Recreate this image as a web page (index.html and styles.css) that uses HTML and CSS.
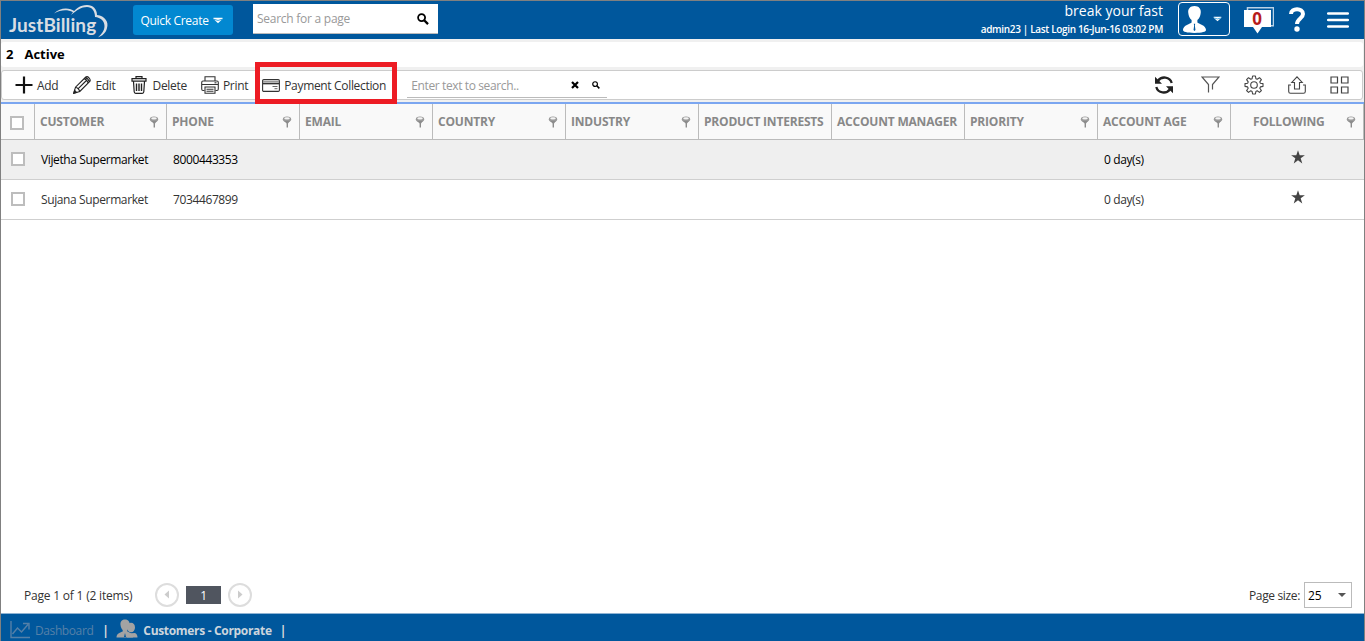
FILE: index.html
```html
<!DOCTYPE html>
<html lang="en">
<head>
  <meta charset="UTF-8">
  <title>JustBilling - Customers</title>
  <link rel="stylesheet" href="styles.css">
</head>
<body>

<!-- shared icons -->
<svg class="sprite">
  <symbol id="pin" viewBox="0 0 10 12">
    <ellipse cx="5" cy="3.2" rx="4.2" ry="2.8" fill="#9a9a9a"/>
    <ellipse cx="5" cy="2.4" rx="2.8" ry="1.1" fill="#f4f4f4"/>
    <path d="M2 5h6L6 7.500v4H4.600v-4z" fill="#8c8c8c"/>
  </symbol>
  <symbol id="lens" viewBox="0 0 12 12">
    <circle cx="4.600" cy="4.600" r="3.500" fill="none" stroke="#000" stroke-width="1.800"/>
    <path d="M7.200 7.200l3.800 3.900" stroke="#000" stroke-width="2.300"/>
  </symbol>
  <symbol id="caret" viewBox="0 0 10 7">
    <path d="M0.500 .800h9v1.200L5 6.200 0.500 2z" fill="#fff"/>
    <path d="M1 2.300q4 2.200 8 0" fill="none" stroke="#0288d1" stroke-width=".8"/>
  </symbol>
  <symbol id="star" viewBox="0 0 24 24">
    <path d="M12 0.500l2.900 8.500h8.900l-7.200 5.300 2.700 8.700-7.300-5.300-7.300 5.300 2.700-8.700L0.200 9h8.900z" fill="#444"/>
  </symbol>
</svg>

<header class="topbar">
  <div class="logo">
    <svg width="102" height="38" viewBox="0 0 102 38">
      <path d="M45 12.500C51 6.500 60 6 66 10.500l-2 .8C58 8.300 52 8.800 45 12.500z" fill="#d8dde3"/>
      <path d="M62 14C66 8 71 4 78 4c6 0 10 4 10 10 8 1 12 7 10 13-1 5-5 8-9 9.500 4-4 6.500-7 6.500-11.500 0-5-4-8.500-9.500-9 0-6-3-10-8-10-6 0-10 3-16 8z" fill="#d8dde3"/>
    </svg>
    <span>JustBilling</span>
  </div>
  <button class="quick">Quick Create <svg width="10" height="7"><use href="#caret"/></svg></button>
  <div class="page-search">
    <span>Search for a page</span>
    <svg width="12" height="12"><use href="#lens"/></svg>
  </div>
  <div class="account">
    <div class="company">break your fast</div>
    <div class="login">admin23 | Last Login 16-Jun-16 03:02 PM</div>
  </div>
  <button class="user">
    <svg width="25" height="29" viewBox="0 0 26 29">
      <path d="M13 0.500c4.500 0 7 3 6.500 7-.3 3-1.500 6-3.500 7.500v2.500c1 1.500 9 2.500 9 8 0 1.800-4 3-12 3s-12-1.200-12-3c0-5.500 8-6.500 9-8V15C8 13.500 6.800 10.500 6.500 7.500 6 3.500 8.500.500 13 .500z" fill="#fff"/>
      <path d="M12.300 19h1.400l-.3 2 .6 4.500-1 1-1-1 .6-4.500z" fill="#00579c"/>
    </svg>
    <svg width="9" height="6" viewBox="0 0 10 7"><use href="#caret"/></svg>
  </button>
  <div class="notice">
    <svg width="30" height="27" viewBox="0 0 30 27">
      <path d="M3.500 3V.800h26v18H27" fill="none" stroke="#b9d1e6" stroke-width="1.500"/>
      <path d="M0 3h27v17h-9l-4.500 6.500L9 20H0z" fill="#fff"/>
    </svg>
    <span>0</span>
  </div>
  <svg class="help" width="16" height="25" viewBox="0 0 16 25">
    <path d="M2 7C2 .800 14 .500 14 7c0 4.500-6 4.500-6 10" fill="none" stroke="#fff" stroke-width="4"/>
    <circle cx="8" cy="22" r="2.700" fill="#fff"/>
  </svg>
  <svg class="menu" width="22" height="16" viewBox="0 0 22 16">
    <path d="M1.200 1.500h19.600M1.200 8h19.600M1.200 14.500h19.600" stroke="#fff" stroke-width="2.600" stroke-linecap="round"/>
  </svg>
</header>

<h1 class="title"><span>2</span>Active</h1>

<div class="toolbar">
  <button class="tool add">
    <svg width="18" height="18" viewBox="0 0 18 18"><path d="M9 .500v17M.500 9h17" stroke="#111" stroke-width="2.200"/></svg>
    <span>Add</span>
  </button>
  <button class="tool edit">
    <svg width="18" height="18" viewBox="0 0 18 18" fill="none" stroke="#222" stroke-width="1.100">
      <path d="M.800 17.200l1.700-6L12.800 1q1.500-1 3.200.800t1 3.400L6.800 15.500zM2.500 11.200q3 .500 4.300 4.300M11 2.800q3 .800 4.200 4.200M12.200 1.600q3 .800 4.200 4.200M4.700 13.200l8.700-8.700"/>
      <path d="M.800 17.200l.800-2.800 2 2z" fill="#222"/>
    </svg>
    <span>Edit</span>
  </button>
  <button class="tool delete">
    <svg width="16" height="18" viewBox="0 0 16 18" fill="none" stroke="#222" stroke-width="1.200">
      <path d="M5 2.500V.700h6v1.800M1 2.700h14v2.500H1zM2.500 5.500l.7 10.300q.1 1.500 1.500 1.500h6.600q1.400 0 1.500-1.500l.7-10.300"/>
      <path d="M5.500 7.500v7.500M8 7.500v7.500M10.500 7.500v7.500" stroke-width="1.400"/>
    </svg>
    <span>Delete</span>
  </button>
  <button class="tool print">
    <svg width="18" height="18" viewBox="0 0 18 18" fill="none" stroke="#333" stroke-width="1.100">
      <path d="M4 5V.700h10V5M3.500 14.500H2Q.700 14.500.700 13V6.500Q.700 5 2 5h14q1.300 0 1.300 1.500V13q0 1.500-1.300 1.500h-1.500M.700 8.500h16.600"/>
      <path d="M4 11h10v6.300H4zM5.500 13.200h7M5.500 15.200h7"/>
      <path d="M13.500 6.800h2"/>
    </svg>
    <span>Print</span>
  </button>
  <button class="tool payment">
    <svg width="18" height="13" viewBox="0 0 18 13" fill="none" stroke="#333">
      <rect x=".600" y=".600" width="16.800" height="11.800" rx="1.200" stroke-width="1.100"/>
      <path d="M1 2.500h16" stroke="#999"/>
      <path d="M1 4.500h16" stroke-width="1.700"/>
      <path d="M10.500 7.500h5M12.500 9.700h3" stroke="#666"/>
    </svg>
    <span>Payment Collection</span>
  </button>
  <div class="grid-search">
    <span>Enter text to search..</span>
    <svg class="clear" width="8" height="8" viewBox="0 0 8 8"><path d="M1 1l6 6M7 1L1 7" stroke="#000" stroke-width="2.200"/></svg>
    <svg width="8" height="8"><use href="#lens"/></svg>
  </div>
  <div class="actions">
    <svg width="20" height="18" viewBox="0 0 20 18" fill="none" stroke="#222" stroke-width="2.300">
      <path d="M17.700 7C16 .500 7.500-.300 3.700 5M2.300 11C4 17.500 12.500 18.300 16.300 13"/>
      <path d="M1 .800v7h7zM19 17.200v-7h-7z" fill="#222" stroke="none"/>
    </svg>
    <svg width="19" height="18" viewBox="0 0 19 18" fill="none" stroke="#555" stroke-width="1.200">
      <path d="M7.500 16.500V8.500L1 1h17l-6.500 7.500v5"/>
    </svg>
    <svg width="20" height="20" viewBox="0 0 20 20" fill="none" stroke="#444" stroke-width="1.100" stroke-linejoin="round">
      <path d="M8.600 1h2.800l.5 2.700 1.300.6 2.300-1.600 1.900 1.900-1.600 2.300.6 1.300 2.600.4v2.800l-2.600.5-.6 1.300 1.600 2.300-1.900 1.900-2.300-1.600-1.300.6-.5 2.600H8.600l-.5-2.600-1.300-.6-2.300 1.600-1.900-1.900 1.600-2.300-.6-1.300L1 11.400V8.600l2.600-.4.600-1.300-1.600-2.300 1.900-1.900 2.300 1.600 1.300-.6z"/>
      <circle cx="10" cy="10" r="3.300"/>
    </svg>
    <svg width="18" height="18" viewBox="0 0 18 18" fill="none" stroke="#444" stroke-width="1.100">
      <path d="M3 9H.700v6.500q0 1.800 1.800 1.800h13q1.800 0 1.800-1.800V9H15"/>
      <path d="M6.500 13V6.500H3.800L9 .900l5.200 5.600h-2.700V13z"/>
    </svg>
    <svg width="19" height="18" viewBox="0 0 19 18" fill="none" stroke="#444" stroke-width="1.200">
      <path d="M1 1h6.500v6H1zM11.500 1H18v6h-6.500zM1 11h6.500v6H1zM11.500 11H18v6h-6.500z"/>
    </svg>
  </div>
</div>

<main>
  <table class="grid">
    <thead>
      <tr>
        <th class="check"><i></i></th>
        <th class="customer"><div>CUSTOMER<svg><use href="#pin"/></svg></div></th>
        <th><div>PHONE<svg><use href="#pin"/></svg></div></th>
        <th><div>EMAIL<svg><use href="#pin"/></svg></div></th>
        <th><div>COUNTRY<svg><use href="#pin"/></svg></div></th>
        <th><div>INDUSTRY<svg><use href="#pin"/></svg></div></th>
        <th><div>PRODUCT INTERESTS</div></th>
        <th><div>ACCOUNT MANAGER</div></th>
        <th><div>PRIORITY<svg><use href="#pin"/></svg></div></th>
        <th><div>ACCOUNT AGE<svg><use href="#pin"/></svg></div></th>
        <th class="following"><div>FOLLOWING<svg><use href="#pin"/></svg></div></th>
      </tr>
    </thead>
    <tbody>
      <tr class="selected">
        <td class="check"><i></i></td>
        <td>Vijetha Supermarket</td>
        <td>8000443353</td>
        <td></td><td></td><td></td><td></td><td></td><td></td>
        <td>0 day(s)</td>
        <td class="fav"><svg><use href="#star"/></svg></td>
      </tr>
      <tr>
        <td class="check"><i></i></td>
        <td>Sujana Supermarket</td>
        <td>7034467899</td>
        <td></td><td></td><td></td><td></td><td></td><td></td>
        <td>0 day(s)</td>
        <td class="fav"><svg><use href="#star"/></svg></td>
      </tr>
    </tbody>
  </table>

  <div class="pager">
    <span class="summary">Page 1 of 1 (2 items)</span>
    <svg width="24" height="24" viewBox="0 0 24 24"><circle cx="12" cy="12" r="11" fill="none" stroke="#ddd" stroke-width="2"/><path d="M14 7.500v8L9.500 11.500z" fill="#ccc"/></svg>
    <span class="current">1</span>
    <svg width="24" height="24" viewBox="0 0 24 24"><circle cx="12" cy="12" r="11" fill="none" stroke="#ddd" stroke-width="2"/><path d="M10 7.500v8l4.500-4z" fill="#ccc"/></svg>
    <span class="size-label">Page size:</span>
    <div class="size">25 <svg width="8" height="4" viewBox="0 0 8 4"><path d="M0 0h8L4 4z" fill="#555"/></svg></div>
  </div>
</main>

<footer class="taskbar">
  <a class="task dashboard">
    <svg width="21" height="18" viewBox="0 0 21 18" fill="none" stroke="#5580a8" stroke-width="1.400">
      <path d="M1 0v16.500h19M2.500 13l5-6 4 4L18 3.500M13 2.500h6v6"/>
    </svg>
    <span>Dashboard</span>
  </a>
  <b class="sep">|</b>
  <a class="task customers">
    <svg width="22" height="20" viewBox="0 0 22 20" fill="#a3a3a3">
      <ellipse cx="15" cy="8.500" rx="4" ry="4.800"/>
      <path d="M11 18.500v-4l8-.500q2.500 1 2.500 4.500z"/>
      <path d="M9 .500c3.500 0 5 2.500 4.500 5.500-.3 2.500-1.200 4-2.200 5v1.500c2 1 5.700 1.500 5.700 6H.500c0-4.500 4.200-5 6.200-6V11C5.700 10 4.800 8.500 4.500 6 4 3 5.500.500 9 .500z"/>
      <path d="M9 14l1 4H8z" fill="#00579c"/>
    </svg>
    <span>Customers - Corporate</span>
  </a>
  <b class="sep">|</b>
</footer>

</body>
</html>
```
FILE: styles.css
```css
* {
  box-sizing: border-box;
}
body {
  display: flex;
  flex-direction: column;
  height: 641px;
  margin: 0;
  border: 1px solid #808080;
  border-bottom: none;
  background: #f0f0f0;
  color: #333;
  font: 12px 'Open Sans', sans-serif;
  overflow: hidden;
}
svg {
  display: block;
  flex: none;
}
span, div, th, td {
  white-space: nowrap;
}
button {
  padding: 0;
  border: none;
  background: none;
  color: inherit;
  font: inherit;
}
.sprite {
  position: absolute;
  width: 0;
  height: 0;
}

/* top bar */
.topbar {
  display: flex;
  align-items: flex-start;
  flex: none;
  height: 38px;
  background: #00579c;
  color: #fff;
}
.logo {
  position: relative;
  width: 132px;
  height: 38px;
  padding: 11px 0 0 8px;
  color: #d8dde3;
  font: 700 19px/26px Lato, sans-serif;
  letter-spacing: 0.1px;
}
.logo svg {
  position: absolute;
  left: 8px;
  top: 0;
}
.quick {
  display: flex;
  align-items: center;
  justify-content: center;
  gap: 4px;
  width: 100px;
  height: 30px;
  margin-top: 4px;
  padding-right: 5px;
  border-radius: 3px;
  background: #0288d1;
  letter-spacing: -0.3px;
}
.quick svg {
  margin-right: -2px;
}
.page-search {
  display: flex;
  align-items: center;
  justify-content: space-between;
  width: 185px;
  height: 30px;
  margin: 3px 0 0 20px;
  padding: 0 9px 0 4px;
  border-bottom: 1px solid #bbb;
  background: #fff;
  color: #999;
  letter-spacing: -0.26px;
}
.account {
  margin-left: auto;
  text-align: right;
}
.company {
  font-size: 14px;
  line-height: 20px;
}
.login {
  font-size: 10px;
  font-weight: 600;
  line-height: 17px;
  letter-spacing: -0.34px;
}
.user {
  display: flex;
  align-items: center;
  gap: 6px;
  width: 52px;
  height: 34px;
  margin: 1px 0 0 15px;
  padding-left: 3px;
  border: 1px solid #fff;
  border-radius: 4px;
}
.notice {
  position: relative;
  margin: 6px 0 0 14px;
}
.notice span {
  position: absolute;
  left: 0;
  top: 2px;
  width: 26px;
  color: #b71c1c;
  font-size: 17px;
  font-weight: 700;
  line-height: 20px;
  text-align: center;
}
.help {
  margin: 6px 0 0 15px;
}
.menu {
  margin: 11px 15px 0 22px;
}

.title {
  flex: none;
  height: 25px;
  margin: 3px 1px 3px 0;
  padding-left: 5px;
  border-radius: 3px;
  background: #fff;
  color: #000;
  font-size: 13px;
  font-weight: 700;
  line-height: 25px;
}
.title span {
  margin-right: 11px;
}

/* toolbar */
.toolbar {
  display: flex;
  align-items: center;
  flex: none;
  height: 30px;
  margin-right: 1px;
  border: 1px solid #ccc;
  border-radius: 3px;
  background: #fff;
}
.tool {
  display: flex;
  align-items: center;
  gap: 4px;
  letter-spacing: -0.3px;
}
.add {
  margin-left: 13px;
}
.edit {
  margin-left: 15px;
}
.delete {
  gap: 6px;
  margin-left: 15px;
}
.print {
  margin-left: 14px;
}
.payment {
  position: relative;
  top: -2px;
  width: 142px;
  height: 42px;
  margin: -6px 0 -6px 7px;
  padding: 5px 0 0 2px;
  border: 5px solid #ed1c24;
  letter-spacing: -0.33px;
}
.grid-search {
  display: flex;
  align-items: center;
  width: 200px;
  height: 24px;
  margin: 1px 0 0 10px;
  padding: 0 7px 0 4px;
  border-bottom: 1px solid #bbb;
  color: #999;
  letter-spacing: -0.38px;
}
.clear {
  margin: 0 13px 0 auto;
}
.actions {
  display: flex;
  align-items: center;
  margin: 0 13px 0 auto;
  gap: 24px;
}
.actions svg:nth-child(1) {
  margin-right: 3px;
}

/* customer grid */
main {
  display: flex;
  flex-direction: column;
  flex: 1;
  margin-top: 2px;
  border-top: 2px solid #7ba6f0;
  background: #fff;
}
.grid {
  width: 1363px;
  border-collapse: separate;
  border-spacing: 0;
  table-layout: fixed;
}
th, td {
  padding: 0 0 0 6px;
  border-bottom: 1px solid #cfcfcf;
  text-align: left;
}
th {
  width: 133px;
  height: 36px;
  padding: 0 7px 0 5px;
  border-right: 1px solid #bbb;
  border-bottom-color: #bbb;
  background: #f9f9f9;
  color: #888;
  font-weight: 700;
  letter-spacing: -0.2px;
}
th.customer {
  width: 132px;
}
th div {
  display: flex;
  align-items: center;
  justify-content: space-between;
}
th svg {
  width: 10px;
  height: 12px;
}
th.following {
  padding-left: 22px;
}
td {
  height: 40px;
  letter-spacing: -0.38px;
}
.selected td {
  background: #efefef;
  color: #000;
}
.check {
  width: 34px;
  padding: 0 0 0 9px;
}
.check i {
  display: block;
  width: 14px;
  height: 14px;
  border: 2px solid #bdbdbd;
  background: #fff;
}
th.check i {
  margin-top: 2px;
}
td.check i {
  margin: -2px 0 0 1px;
}
.fav svg {
  width: 14px;
  height: 14px;
  margin: -6px 0 0 54px;
}

.pager {
  display: flex;
  align-items: center;
  height: 36px;
  margin-top: auto;
  padding: 0 12px 0 23px;
  letter-spacing: -0.2px;
}
.summary {
  width: 131px;
}
.current {
  width: 35px;
  height: 18px;
  margin: 0 7px;
  background: #50555f;
  color: #fff;
  line-height: 19px;
  text-align: center;
}
.size-label {
  margin-left: auto;
  letter-spacing: -0.35px;
}
.size {
  display: flex;
  align-items: center;
  justify-content: space-between;
  width: 48px;
  height: 26px;
  margin-left: 4px;
  padding: 0 5px 0 3px;
  border: 1px solid #bbb;
  color: #000;
}

/* open pages */
.taskbar {
  display: flex;
  align-items: center;
  flex: none;
  height: 28px;
  padding: 5px 0 0 9px;
  border-top: 1px solid #8fb3d3;
  background: #00579c;
}
.task {
  display: flex;
  align-items: center;
  gap: 4px;
}
.dashboard {
  color: #5580a8;
  letter-spacing: -0.4px;
}
.customers {
  gap: 5px;
  color: #ccd5dd;
  font-weight: 700;
  letter-spacing: -0.32px;
}
.customers svg {
  margin: -2px 0 0 -1px;
}
.sep {
  width: 6px;
  margin: 0 9px;
  color: #ddd;
  text-align: center;
}
.customers + .sep {
  margin-left: 8px;
}
```
